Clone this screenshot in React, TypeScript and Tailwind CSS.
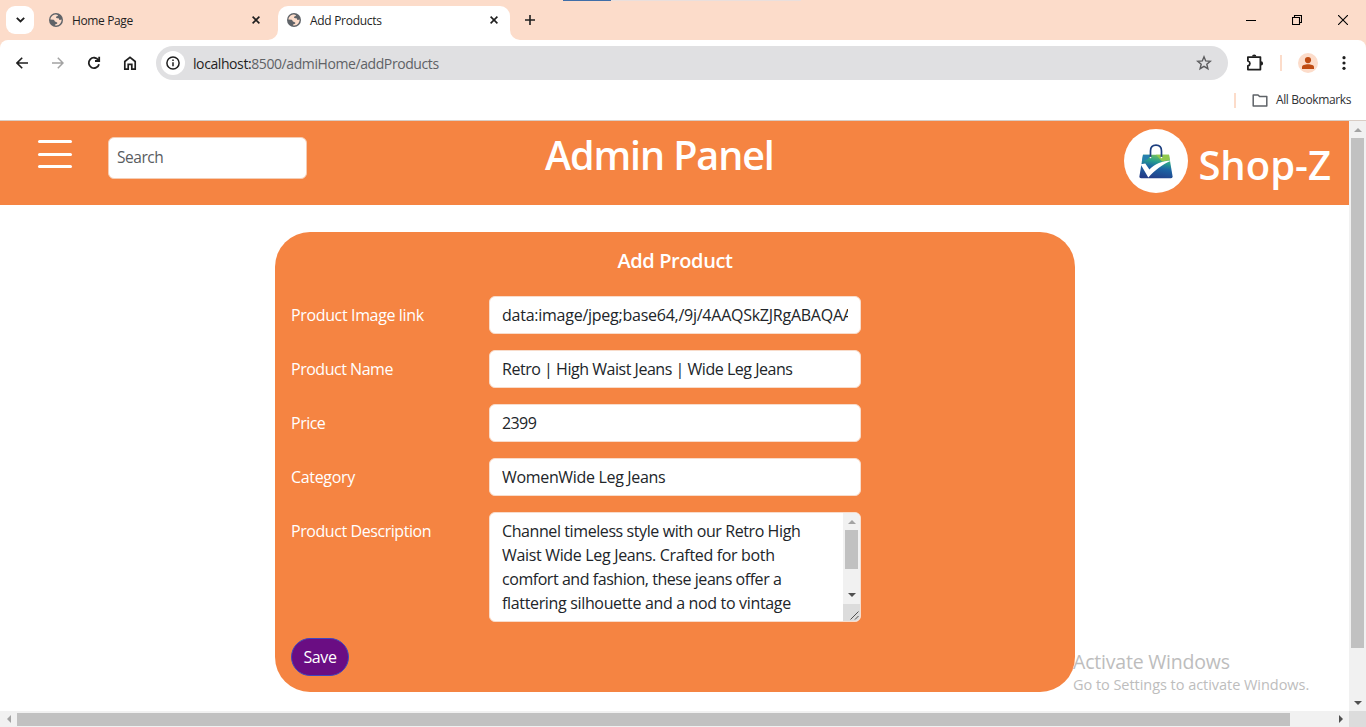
import React from "react";

const stroke = {
  fill: "none",
  stroke: "currentColor",
  strokeWidth: 1.8,
} as const;

function Globe() {
  return (
    <svg className="size-[14px] shrink-0" viewBox="0 0 14 14">
      <circle cx="7" cy="7" r="7" fill="#5f6368" />
      <path
        d="M7.2 1.4C8.3 1.5 9.1 1.9 9 2.6C8.8 3.5 7.4 3.2 7 4C6.8 4.7 7.4 5.2 8.2 5.2H9.3C10 5.2 10.2 6 10.1 6.8C11 7.2 11.8 6.7 12.6 6.5C12.8 9.4 10.6 12.2 7.6 12.6C7.1 12.6 6.3 12.5 5.9 12.3C5.8 11.5 6.5 11 7.4 10.9C8.3 10.7 8.5 10 8.1 9.4C7.6 8.7 6.6 9 6 8.4C5.4 7.8 5.4 7 4.6 6.8L1.4 6.5C1.6 3.5 4.2 1.2 7.2 1.4Z"
        fill="#fcdcca"
      />
    </svg>
  );
}

function Close() {
  return (
    <svg className="size-[8px]" viewBox="0 0 8 8" {...stroke} strokeWidth={1.6}>
      <path d="M.6.6 7.4 7.4M7.4.6.6 7.4" />
    </svg>
  );
}

function TabStrip() {
  return (
    <div className="relative flex h-[40px] shrink-0 bg-[#fcdcca] text-[#1f1f1f]">
      <div className="ml-[6px] mt-[6px] grid size-[28px] place-items-center rounded-[9px] bg-white">
        <svg className="h-[6px] w-[9px]" viewBox="0 0 9 6" {...stroke}>
          <path d="M.8.8 4.5 4.5 8.2.8" />
        </svg>
      </div>
      <div className="ml-[15px] flex h-[40px] w-[229px] items-center pr-[18px]">
        <Globe />
        <span className="ml-[9px] mt-[2px] grow text-[12px] tracking-[-0.38px]">Home Page</span>
        <Close />
      </div>
      <div className="relative mt-[6px] flex h-[34px] w-[232px] items-center rounded-t-[10px] bg-white pb-[6px] pl-[9px] pr-[12px]">
        <svg className="absolute -left-[10px] bottom-0 size-[10px]" viewBox="0 0 10 10">
          <path d="M10 0V10H0A10 10 0 0 0 10 0Z" fill="#fff" />
        </svg>
        <svg className="absolute -right-[10px] bottom-0 size-[10px]" viewBox="0 0 10 10">
          <path d="M0 0V10H10A10 10 0 0 1 0 0Z" fill="#fff" />
        </svg>
        <Globe />
        <span className="ml-[9px] mt-[2px] grow text-[12px] tracking-[-0.3px]">Add Products</span>
        <Close />
      </div>
      <div className="ml-[15px] flex items-center">
        <svg className="size-[10px]" viewBox="0 0 10 10" {...stroke} strokeWidth={1.6}>
          <path d="M5 0V10M0 5H10" />
        </svg>
      </div>
      <div className="ml-auto mr-[18px] flex items-center gap-[36px] text-black">
        <svg className="size-[10px]" viewBox="0 0 10 10" {...stroke} strokeWidth={1}>
          <path d="M0 5.5H10" />
        </svg>
        <svg className="size-[10px]" viewBox="0 0 10 10" {...stroke} strokeWidth={1.1}>
          <path d="M.5 2.5H7.5V9.5H.5ZM2.5 2.5V.5H9.5V7.5H7.5" />
        </svg>
        <svg className="size-[10px]" viewBox="0 0 10 10" {...stroke} strokeWidth={1.1}>
          <path d="M0 0 10 10M10 0 0 10" />
        </svg>
      </div>
      <div className="absolute left-[563px] top-0 h-px w-[48px] bg-[#3f6ea8]" />
      <div className="absolute left-[611px] top-0 h-px w-[190px] bg-[#eadfdc]" />
    </div>
  );
}

function Toolbar() {
  return (
    <div className="bg-[#fcdcca]">
      <div className="flex h-[46px] items-center rounded-t-[8px] bg-white text-[#1f1f1f]">
        <svg className="ml-[16px] size-[12px]" viewBox="0 0 12 12" {...stroke} strokeWidth={1.6}>
          <path d="M12 6H1M6.2.8 1 6 6.2 11.2" />
        </svg>
        <svg className="ml-[24px] size-[12px] text-[#a3a3a3]" viewBox="0 0 12 12" {...stroke} strokeWidth={1.5}>
          <path d="M0 6H11M5.8.8 11 6 5.8 11.2" />
        </svg>
        <svg className="ml-[23px] size-[14px]" viewBox="0 0 14 14" {...stroke}>
          <path d="M12 8.2A5.2 5.2 0 1 1 11.4 4.2M12.2.8V5H8" />
        </svg>
        <svg className="ml-[22px] size-[14px]" viewBox="0 0 14 14" {...stroke} strokeWidth={1.7}>
          <path d="M1.8 13.1V5.5L7 1.4 12.2 5.5V13.1H8.8V8.4H5.2V13.1Z" />
        </svg>
        <div className="ml-[19px] flex h-[34px] w-[1072px] items-center rounded-full bg-[#e0e0e2] pl-[5px] pr-[16px]">
          <div className="grid size-[24px] place-items-center rounded-full bg-white">
            <svg className="size-[14px]" viewBox="0 0 14 14" {...stroke} strokeWidth={1.5}>
              <circle cx="7" cy="7" r="6.1" />
              <path d="M7 6.2V10.3M7 3.5V5" />
            </svg>
          </div>
          <span className="ml-[8px] grow text-[14px] tracking-[-0.41px] text-[#5f6266]">
            <span className="text-[#1f1f1f]">localhost:</span>8500/admiHome/addProducts
          </span>
          <svg className="size-[16px] text-[#5c5c5e]" viewBox="0 0 16 16" {...stroke} strokeWidth={1.4}>
            <path d="M8 1.8 9.7 5.9 14.3 6.3 10.8 9.2 11.9 13.7 8 11.3 4.1 13.7 5.2 9.2 1.7 6.3 6.3 5.9Z" />
          </svg>
        </div>
        <svg className="ml-[18px] size-[18px]" viewBox="0 0 18 18" {...stroke} strokeWidth={1.8}>
          <path d="M1.9 3.1H14.4V15.6H1.9V11.8C4.6 11.2 4.6 7.7 1.9 7Z" strokeLinejoin="round" />
          <path d="M6 2.6A2.2 2.2 0 0 1 10.4 2.6ZM15 7.3A2.1 2.1 0 0 1 15 11.5Z" fill="currentColor" stroke="none" />
        </svg>
        <div className="ml-[16px] h-[16px] w-[2px] bg-[#fcdcca]" />
        <svg className="ml-[16px] size-[20px]" viewBox="0 0 20 20">
          <circle cx="10" cy="10" r="10" fill="#fcdcca" />
          <circle cx="10" cy="7.1" r="3.1" fill="#bf4b12" />
          <path d="M4 16V14C4 10.2 16 10.2 16 14V16Z" fill="#bf4b12" />
        </svg>
        <svg className="ml-[24px] h-[14px] w-[4px]" viewBox="0 0 4 14" fill="#1f1f1f">
          <circle cx="2" cy="1.7" r="1.6" />
          <circle cx="2" cy="7" r="1.6" />
          <circle cx="2" cy="12.3" r="1.6" />
        </svg>
      </div>
      <div className="flex h-[35px] items-center justify-end border-b border-[#d9cdc5] bg-white pb-[6px] pr-[15px] text-[12px] text-[#303134]">
        <div className="mr-[16px] h-[15px] w-[2px] bg-[#fcdcca]" />
        <svg className="mr-[8px] h-[13px] w-[16px] text-[#5f6368]" viewBox="0 0 16 13" {...stroke} strokeWidth={1.5}>
          <path d="M1.2.9H6L7.6 2.6H14.8V12.1H1.2Z" strokeLinejoin="round" />
        </svg>
        <span className="tracking-[-0.38px]">All Bookmarks</span>
      </div>
    </div>
  );
}

function Logo() {
  return (
    <div className="grid size-[64px] place-items-center rounded-full bg-white">
      <svg className="size-[36px]" viewBox="0 0 36 36">
        <defs>
          <linearGradient id="bag" x1=".65" y1="0" x2=".4" y2="1">
            <stop offset="0" stopColor="#7cc25a" />
            <stop offset=".3" stopColor="#269f8e" />
            <stop offset=".55" stopColor="#1c65a4" />
            <stop offset="1" stopColor="#233d88" />
          </linearGradient>
        </defs>
        <path d="M5 11.8H31L34.6 33.6Q34.6 35.2 33 35.2H3Q1.2 35.2 1.4 33.6Z" fill="url(#bag)" />
        <path d="M5 11.8H13L10 16 3.9 18.8Z" fill="#2780af" />
        <path d="M18 11.8H31L31.7 17 24 18.5Z" fill="#91c94e" />
        <path d="M12.5 14V8Q12.5 2.2 18 2.2T23.5 8V14" fill="none" stroke="#1d3f7f" strokeWidth="1.7" />
        <circle cx="12.5" cy="14.5" r=".8" fill="#fff" />
        <circle cx="23.5" cy="14.5" r=".8" fill="#fff" />
        <path d="M2.6 21.3 7.3 20.6 11.4 26.6C17 21 24 17.8 33.6 17.6C24 21.8 17 27 10.3 34.6Z" fill="#fff" />
      </svg>
    </div>
  );
}

function Header() {
  return (
    <header className="flex h-[84px] shrink-0 items-start bg-[#f58442] text-white">
      <div className="ml-[38px] mt-[19px] flex w-[34px] flex-col gap-[9.5px]">
        <div className="h-[3px] rounded-full bg-white" />
        <div className="h-[3px] rounded-full bg-white" />
        <div className="h-[3px] rounded-full bg-white" />
      </div>
      <div className="ml-[36px] mt-[16px] flex h-[42px] w-[199px] items-center rounded-[6px] border border-[#f5cdb4] bg-white pl-[8px] text-[15.5px] tracking-[-0.45px] text-[#595c5f]">
        Search
      </div>
      <h1 className="ml-[238px] mt-[4px] w-[240px] whitespace-nowrap text-[39.5px] font-semibold leading-[60px] tracking-[-1.1px]">
        Admin Panel
      </h1>
      <div className="ml-auto mt-[8px] flex">
        <Logo />
        <span className="ml-[10px] mr-[18px] mt-[6px] whitespace-nowrap text-[40px] font-semibold leading-[60px]">
          Shop-Z
        </span>
      </div>
    </header>
  );
}

type FieldProps = { label: string; value: string; labelClass: string; valueClass: string };

const fields: FieldProps[] = [
  { label: "Product Image link", value: "data:image/jpeg;base64,/9j/4AAQSkZJRgABAQAAAQ", labelClass: "tracking-[-0.36px]", valueClass: "tracking-[-0.25px]" },
  { label: "Product Name", value: "Retro | High Waist Jeans | Wide Leg Jeans", labelClass: "tracking-[-0.48px]", valueClass: "tracking-[-0.47px]" },
  { label: "Price", value: "2399", labelClass: "tracking-[-0.5px]", valueClass: "tracking-[-0.6px]" },
  { label: "Category", value: "WomenWide Leg Jeans", labelClass: "tracking-[-0.33px]", valueClass: "tracking-[-0.33px]" },
];

const description = [
  { text: "Channel timeless style with our Retro High", cls: "tracking-[-0.41px]" },
  { text: "Waist Wide Leg Jeans. Crafted for both", cls: "tracking-[-0.33px]" },
  { text: "comfort and fashion, these jeans offer a", cls: "tracking-[-0.45px]" },
  { text: "flattering silhouette and a nod to vintage", cls: "tracking-[-0.34px]" },
];

function Arrow({ dir, color }: { dir: "up" | "down" | "left" | "right"; color: string }) {
  const d = {
    up: "M0 6 4 2 8 6Z",
    down: "M0 2 4 6 8 2Z",
    left: "M6 0 2 4 6 8Z",
    right: "M2 0 6 4 2 8Z",
  }[dir];
  return (
    <svg className="size-[8px]" viewBox="0 0 8 8" fill={color}>
      <path d={d} />
    </svg>
  );
}

function ProductForm() {
  return (
    <section className="ml-[275px] mt-[27px] h-[460px] w-[800px] rounded-[35px] bg-[#f58442] px-[16px] pt-[14px] text-[16px] leading-[24px] text-white">
      <h2 className="h-[30px] text-center text-[20px] font-semibold leading-[30px] tracking-[-0.4px]">Add Product</h2>
      <div className="mt-[20px] flex flex-col gap-[16px]">
        {fields.map((f) => (
          <div key={f.label} className="flex h-[38px] items-center">
            <span className={`w-[198px] whitespace-nowrap ${f.labelClass}`}>{f.label}</span>
            <div className="flex h-[38px] w-[372px] items-center rounded-[6px] border border-[#f8dccb] bg-white px-[12px] text-[#212529]">
              <span className={`w-full overflow-hidden whitespace-nowrap ${f.valueClass}`}>{f.value}</span>
            </div>
          </div>
        ))}
        <div className="flex h-[110px] items-start">
          <span className="mt-[7px] w-[198px] whitespace-nowrap tracking-[-0.43px]">Product Description</span>
          <div className="flex h-[110px] w-[372px] overflow-hidden rounded-[6px] border border-[#f8dccb] bg-white text-[#212529]">
            <div className="grow overflow-hidden pl-[12px] pt-[6px]">
              {description.map((l) => (
                <div key={l.text} className={`whitespace-nowrap ${l.cls}`}>{l.text}</div>
              ))}
            </div>
            <div className="flex w-[17px] shrink-0 flex-col items-center bg-[#f1f1f1]">
              <div className="grid h-[17px] place-items-center"><Arrow dir="up" color="#a3a3a3" /></div>
              <div className="h-[39px] w-[13px] bg-[#c1c1c1]" />
              <div className="mt-auto grid h-[18px] place-items-center"><Arrow dir="down" color="#505050" /></div>
              <div className="h-[17px] w-full bg-[#dcdcdc]">
                <svg className="size-[17px] text-[#505050]" viewBox="0 0 17 17" {...stroke} strokeWidth={1}>
                  <path d="M7.5 15.5 15.5 7.5M12 15.5 15.5 12" />
                </svg>
              </div>
            </div>
          </div>
        </div>
        <button className="flex h-[38px] w-[58px] items-center justify-center rounded-full border border-[#3d48c0] bg-[#6a0d83] tracking-[-0.4px] text-white">
          Save
        </button>
      </div>
    </section>
  );
}

export default function App() {
  return (
    <div className="relative flex h-[727px] w-[1366px] flex-col overflow-hidden bg-white font-['Open_Sans','Noto_Sans',sans-serif]">
      <TabStrip />
      <Toolbar />
      <div className="flex h-[590px]">
        <main className="flex w-[1349px] flex-col bg-white">
          <Header />
          <ProductForm />
        </main>
        <div className="flex w-[17px] flex-col items-center bg-[#f1f1f1]">
          <div className="grid h-[17px] place-items-center"><Arrow dir="up" color="#a3a3a3" /></div>
          <div className="h-[510px] w-[13px] bg-[#c1c1c1]" />
          <div className="mt-auto grid h-[17px] place-items-center"><Arrow dir="down" color="#505050" /></div>
        </div>
      </div>
      <div className="flex h-[16px] items-center bg-[#f1f1f1]">
        <div className="grid w-[17px] place-items-center"><Arrow dir="left" color="#a3a3a3" /></div>
        <div className="h-[13px] w-[1273px] bg-[#c1c1c1]" />
        <div className="ml-auto grid w-[17px] place-items-center"><Arrow dir="right" color="#505050" /></div>
        <div className="h-full w-[17px] bg-[#dcdcdc]" />
      </div>
      <div className="absolute left-[1073px] top-[649px] whitespace-nowrap text-[#bdbdbd]">
        <div className="text-[19.5px] leading-[26px] tracking-[-0.2px]">Activate Windows</div>
        <div className="text-[14.5px] leading-[20px] tracking-[-0.04px]">Go to Settings to activate Windows.</div>
      </div>
    </div>
  );
}
